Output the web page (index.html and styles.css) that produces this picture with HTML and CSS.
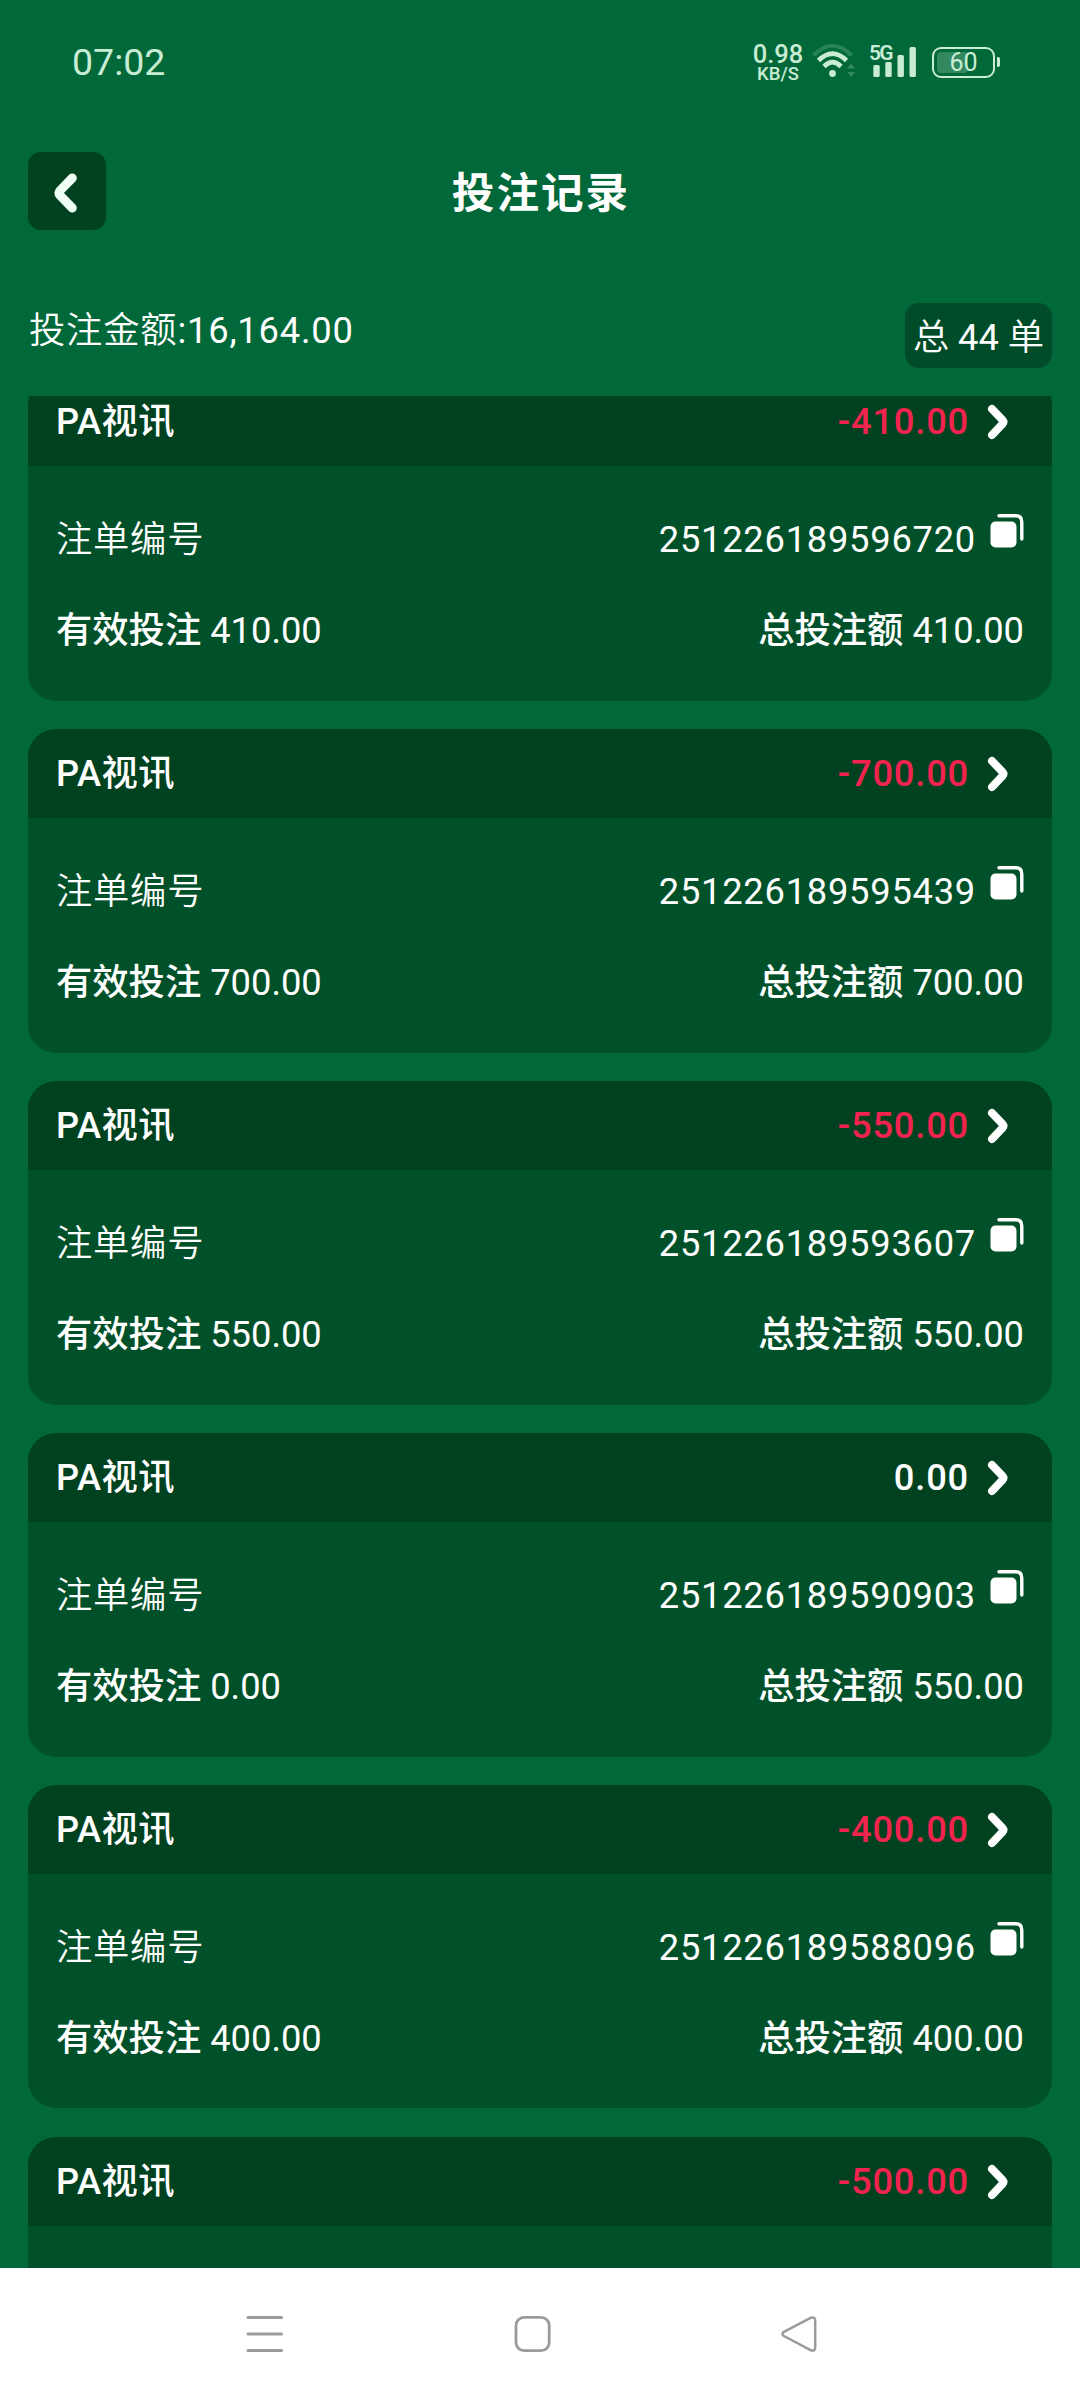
FILE: index.html
```html
<!DOCTYPE html>
<html lang="zh-CN">
<head>
    <meta charset="UTF-8">
    <meta name="viewport" content="width=device-width, initial-scale=1.0">
    <title>投注记录</title>
    <link rel="stylesheet" href="styles.css">
</head>
<body>

<!-- иконки для повторного использования -->
<svg class="sprite">
    <symbol id="arrow" viewBox="0 0 22 36">
        <path d="M5 5 L15.5 16 Q17.3 18 15.5 20 L5 31" fill="none" stroke="#fff" stroke-width="8" stroke-linecap="round" stroke-linejoin="round"/>
    </symbol>
    <symbol id="copy" viewBox="0 0 34 34">
        <rect x="0.5" y="7.5" width="26" height="26" rx="5" fill="#fff"/>
        <path d="M9 1.8 H26 Q31.8 1.8 31.8 8 V25" fill="none" stroke="#fff" stroke-width="3.4" stroke-linecap="round"/>
    </symbol>
</svg>

<div class="status-bar">
    <span class="time">07:02</span>
    <div class="status-icons">
        <div class="speed"><b>0.98</b><span>KB/S</span></div>
        <svg class="wifi" width="44" height="36" viewBox="0 0 44 36">
            <g fill="none" stroke="#c9ecd4">
                <path d="M1.5 12.5 Q20.5 -7 39.5 12.5" stroke-width="4" opacity="0.2"/>
                <path d="M6.5 17.5 Q20.5 3.5 34.5 17.5" stroke-width="4.6"/>
                <path d="M12 23.5 Q20.5 15 29 23.5" stroke-width="4.6"/>
            </g>
            <circle cx="20.5" cy="30.5" r="3.4" fill="#c9ecd4"/>
            <path d="M35 25.5 L39.2 20.5 L43.4 25.5 Z M35 29 L39.2 34 L43.4 29 Z" fill="#c9ecd4" opacity="0.25"/>
        </svg>
        <div class="signal">
            <span class="net">5G</span>
            <svg width="46" height="34" viewBox="0 0 46 34" fill="#c9ecd4">
                <rect x="3.3" y="20" width="6.4" height="12" rx="1.5"/>
                <rect x="15.3" y="17" width="6.4" height="15" rx="1.5"/>
                <rect x="27.5" y="10" width="6.4" height="22" rx="1.5"/>
                <rect x="39.5" y="2" width="6.4" height="30" rx="1.5"/>
            </svg>
        </div>
        <div class="battery"><span class="level"></span><span class="percent">60</span></div>
    </div>
</div>

<header>
    <button class="back-button">
        <svg width="24" height="40" viewBox="0 0 24 40">
            <path d="M18.3 5 L6 17.6 Q4 20 6 22.4 L18.3 35" fill="none" stroke="#f0fff4" stroke-width="9" stroke-linecap="round" stroke-linejoin="round"/>
        </svg>
    </button>
    <h1>投注记录</h1>
</header>

<div class="summary">
    <p class="sum">投注金额<span>:16,164.00</span></p>
    <p class="count">总 <span>44</span> 单</p>
</div>

<main class="list">
    <section class="card">
        <div class="card-head">
            <span class="name">PA视讯</span>
            <span class="result lose">-410.00</span>
            <svg class="arrow"><use href="#arrow"/></svg>
        </div>
        <div class="row order">
            <span class="label">注单编号</span>
            <span class="number">251226189596720</span>
            <svg class="copy"><use href="#copy"/></svg>
        </div>
        <div class="row">
            <span><b>有效投注</b> 410.00</span>
            <span><b>总投注额</b> 410.00</span>
        </div>
    </section>

    <section class="card">
        <div class="card-head">
            <span class="name">PA视讯</span>
            <span class="result lose">-700.00</span>
            <svg class="arrow"><use href="#arrow"/></svg>
        </div>
        <div class="row order">
            <span class="label">注单编号</span>
            <span class="number">251226189595439</span>
            <svg class="copy"><use href="#copy"/></svg>
        </div>
        <div class="row">
            <span><b>有效投注</b> 700.00</span>
            <span><b>总投注额</b> 700.00</span>
        </div>
    </section>

    <section class="card">
        <div class="card-head">
            <span class="name">PA视讯</span>
            <span class="result lose">-550.00</span>
            <svg class="arrow"><use href="#arrow"/></svg>
        </div>
        <div class="row order">
            <span class="label">注单编号</span>
            <span class="number">251226189593607</span>
            <svg class="copy"><use href="#copy"/></svg>
        </div>
        <div class="row">
            <span><b>有效投注</b> 550.00</span>
            <span><b>总投注额</b> 550.00</span>
        </div>
    </section>

    <section class="card">
        <div class="card-head">
            <span class="name">PA视讯</span>
            <span class="result">0.00</span>
            <svg class="arrow"><use href="#arrow"/></svg>
        </div>
        <div class="row order">
            <span class="label">注单编号</span>
            <span class="number">251226189590903</span>
            <svg class="copy"><use href="#copy"/></svg>
        </div>
        <div class="row">
            <span><b>有效投注</b> 0.00</span>
            <span><b>总投注额</b> 550.00</span>
        </div>
    </section>

    <section class="card">
        <div class="card-head">
            <span class="name">PA视讯</span>
            <span class="result lose">-400.00</span>
            <svg class="arrow"><use href="#arrow"/></svg>
        </div>
        <div class="row order">
            <span class="label">注单编号</span>
            <span class="number">251226189588096</span>
            <svg class="copy"><use href="#copy"/></svg>
        </div>
        <div class="row">
            <span><b>有效投注</b> 400.00</span>
            <span><b>总投注额</b> 400.00</span>
        </div>
    </section>

    <section class="card">
        <div class="card-head">
            <span class="name">PA视讯</span>
            <span class="result lose">-500.00</span>
            <svg class="arrow"><use href="#arrow"/></svg>
        </div>
    </section>
</main>

<nav class="nav-bar">
    <svg width="38" height="38" viewBox="0 0 38 38" stroke="#9b9b9b" stroke-width="3" stroke-linecap="round">
        <path d="M2 2.5 H35.5 M2 19 H35.5 M2 35.5 H35.5"/>
    </svg>
    <svg width="38" height="38" viewBox="0 0 38 38" fill="none" stroke="#9b9b9b" stroke-width="2.8">
        <rect x="3" y="2.4" width="33.2" height="33.2" rx="8"/>
    </svg>
    <svg width="38" height="38" viewBox="0 0 38 38" fill="none" stroke="#9b9b9b" stroke-width="2.5">
        <path d="M3.5 17.2 L31 2.7 Q35.2 1.5 35.2 5.5 V32.5 Q35.2 36.5 31 35.3 L3.5 20.8 Q1.5 19 3.5 17.2 Z"/>
    </svg>
</nav>

</body>
</html>
```

FILE: styles.css
```css
* {
    box-sizing: border-box;
}

body {
    font-family: Roboto, "Noto Sans CJK SC", sans-serif;
    font-size: 36.3px;
    line-height: 44px;
    background-color: #006839; /* зелёный фон */
    color: #fff;
    margin: 0;
    height: 2400px;
    display: flex;
    flex-direction: column;
    overflow: hidden;
}

p, h1 {
    margin: 0;
}

.sprite {
    display: none;
}

/* Строка состояния */
.status-bar {
    height: 125px;
    flex: none;
    display: flex;
    justify-content: space-between;
    padding: 0 85px 0 72px;
    color: #c9ecd4;
}

.time {
    margin-top: 40px;
    font-size: 37.5px;
}

.status-icons {
    display: flex;
    align-items: flex-start;
    padding-top: 43px;
}

.speed {
    width: 52px;
    display: flex;
    flex-direction: column;
    align-items: center;
}

.speed b {
    font-size: 25.5px;
    line-height: 23px;
    font-weight: 500;
}

.speed span {
    font-size: 18.5px;
    line-height: 17px;
    font-weight: 500;
}

.wifi {
    margin-left: 8px;
}

.signal {
    display: flex;
    position: relative;
    margin: 2px 0 0 14px;
}

.net {
    position: absolute; /* поверх делений сигнала */
    left: -1px;
    top: -1px;
    font-size: 21px;
    line-height: 18px;
    font-weight: 600;
    letter-spacing: -1.8px;
}

.battery {
    position: relative;
    width: 63px;
    height: 31px;
    margin: 4px 0 0 16px;
    border: 2.5px solid #c9ecd4;
    border-radius: 9px;
    text-align: center;
}

.battery::after {
    content: "";
    position: absolute;
    right: -7px;
    top: 8px;
    width: 3px;
    height: 10px;
    border-radius: 0 2px 2px 0;
    background-color: #c9ecd4;
}

.level {
    position: absolute;
    left: 3px;
    top: 3px;
    width: 31px;
    height: 21px;
    border-radius: 4px;
    background-color: rgba(201, 236, 212, 0.25);
}

.percent {
    display: block;
    font-size: 25px;
    line-height: 28px;
}

/* Заголовок */
header {
    height: 132px;
    flex: none;
    display: grid;
    grid-template-columns: 78px 1fr 78px;
    align-items: center;
    padding: 0 28px;
}

.back-button {
    width: 78px;
    height: 78px;
    border: none;
    border-radius: 13px;
    background-color: #00411f;
    padding: 3px 3px 0 0;
    display: flex;
    align-items: center;
    justify-content: center;
}

h1 {
    padding: 4px 0 0 2px;
    font-size: 42.6px;
    font-weight: 700;
    letter-spacing: 2px;
    text-align: center;
}

/* Итоги */
.summary {
    height: 139px;
    flex: none;
    display: flex;
    justify-content: space-between;
    align-items: flex-start;
    padding: 46px 28px 0;
    font-weight: 350;
}

.summary span {
    font-weight: 400;
}

.sum {
    margin-top: 6px;
    padding-left: 1px;
    letter-spacing: 0.8px;
}

.count {
    height: 65px;
    line-height: 69px;
    padding: 0 8px;
    border-radius: 14px;
    background-color: #004c29;
}

/* Список ставок */
.list {
    height: 1872px;
    flex: none;
    overflow: hidden;
    padding: 0 28px;
}

.card {
    height: 323.8px;
    margin-bottom: 28.1px;
    border-radius: 28px;
    background-color: #005029;
    overflow: hidden;
}

.card:first-child {
    margin-top: -18.9px; /* список прокручен */
}

.card-head {
    height: 89px;
    display: flex;
    align-items: center;
    padding: 1px 43px 0 28px;
    background-color: #004120;
    font-weight: 500;
    letter-spacing: 0.5px;
}

.result {
    margin-left: auto;
    letter-spacing: 0.8px;
}

.lose {
    color: #f2234f;
}

.arrow {
    width: 22px;
    height: 36px;
    margin-left: 18px;
}

.row {
    display: flex;
    justify-content: space-between;
    padding: 0 28px;
    margin-top: 47px;
}

.row b {
    font-weight: 500;
}

.order {
    margin-top: 52px;
    letter-spacing: 0.75px;
}

.label {
    font-weight: 350;
}

.number {
    margin-left: auto;
}

.copy {
    width: 34px;
    height: 34px;
    margin: -4px 0 0 14px;
}

/* Нижняя панель */
.nav-bar {
    flex: 1;
    display: flex;
    justify-content: space-between;
    align-items: center;
    padding: 0 262px 0 246px;
    background-color: #fff;
}
```
